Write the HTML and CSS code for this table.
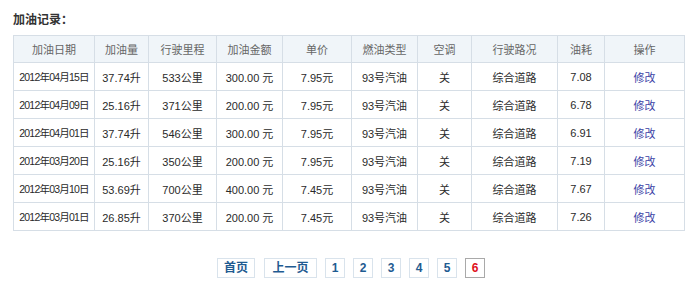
FILE: index.html
```html
<!DOCTYPE html>
<html lang="zh">
<head>
<meta charset="utf-8">
<link rel="stylesheet" href="styles.css">
</head>
<body>
<div class="page">
  <h2 class="title">加油记录：</h2>
  <table class="records">
    <colgroup>
      <col class="c1"><col class="c2"><col class="c3"><col class="c4"><col class="c5">
      <col class="c6"><col class="c7"><col class="c8"><col class="c9"><col class="c10">
    </colgroup>
    <thead>
      <tr><th>加油日期</th><th>加油量</th><th>行驶里程</th><th>加油金额</th><th>单价</th><th>燃油类型</th><th>空调</th><th>行驶路况</th><th>油耗</th><th>操作</th></tr>
    </thead>
    <tbody>
      <tr><td class="date">2012年04月15日</td><td>37.74升</td><td>533公里</td><td>300.00 元</td><td>7.95元</td><td>93号汽油</td><td>关</td><td>综合道路</td><td>7.08</td><td><a href="#" class="edit">修改</a></td></tr>
      <tr><td class="date">2012年04月09日</td><td>25.16升</td><td>371公里</td><td>200.00 元</td><td>7.95元</td><td>93号汽油</td><td>关</td><td>综合道路</td><td>6.78</td><td><a href="#" class="edit">修改</a></td></tr>
      <tr><td class="date">2012年04月01日</td><td>37.74升</td><td>546公里</td><td>300.00 元</td><td>7.95元</td><td>93号汽油</td><td>关</td><td>综合道路</td><td>6.91</td><td><a href="#" class="edit">修改</a></td></tr>
      <tr><td class="date">2012年03月20日</td><td>25.16升</td><td>350公里</td><td>200.00 元</td><td>7.95元</td><td>93号汽油</td><td>关</td><td>综合道路</td><td>7.19</td><td><a href="#" class="edit">修改</a></td></tr>
      <tr><td class="date">2012年03月10日</td><td>53.69升</td><td>700公里</td><td>400.00 元</td><td>7.45元</td><td>93号汽油</td><td>关</td><td>综合道路</td><td>7.67</td><td><a href="#" class="edit">修改</a></td></tr>
      <tr><td class="date">2012年03月01日</td><td>26.85升</td><td>370公里</td><td>200.00 元</td><td>7.45元</td><td>93号汽油</td><td>关</td><td>综合道路</td><td>7.26</td><td><a href="#" class="edit">修改</a></td></tr>
    </tbody>
  </table>
  <nav class="pager">
    <a href="#" class="pg wide1">首页</a>
    <a href="#" class="pg wide2">上一页</a>
    <a href="#" class="pg num">1</a>
    <a href="#" class="pg num">2</a>
    <a href="#" class="pg num">3</a>
    <a href="#" class="pg num">4</a>
    <a href="#" class="pg num">5</a>
    <span class="pg num current">6</span>
  </nav>
</div>
</body>
</html>
```

FILE: styles.css
```css
html, body {
  margin: 0;
  padding: 0;
  background: #ffffff;
}
.page {
  padding: 14px 13px 0 13px;
  font-family: "Liberation Sans", "Noto Sans CJK SC", sans-serif;
  font-size: 12px;
  color: #333333;
}
.title {
  margin: 0;
  font-size: 12px;
  font-weight: bold;
  line-height: 12px;
  color: #333333;
  height: 21px;
}
.records {
  border-collapse: collapse;
  table-layout: fixed;
  width: 671px;
  font-size: 11px;
}
.c1 { width: 81px; }
.c2 { width: 54px; }
.c3 { width: 68px; }
.c4 { width: 66px; }
.c5 { width: 69px; }
.c6 { width: 66px; }
.c7 { width: 54px; }
.c8 { width: 86px; }
.c9 { width: 47px; }
.c10 { width: 80px; }
.records th,
.records td {
  border: 1px solid #d6dee6;
  text-align: center;
  padding: 0;
  white-space: nowrap;
  overflow: hidden;
}
.records th {
  height: 26px;
  background: #f0f5f9;
  font-weight: normal;
  color: #666666;
}
.records td {
  height: 27px;
  color: #2a2a2a;
}
.records td.date {
  font-size: 10.5px;
  letter-spacing: -0.8px;
}
.edit {
  color: #3a3fa6;
  text-decoration: none;
}
.pager {
  display: flex;
  justify-content: center;
  gap: 8px;
  margin-top: 27px;
  padding-left: 2px;
}
.pg {
  box-sizing: border-box;
  height: 20px;
  line-height: 18px;
  border: 1px solid #d9e3ec;
  background: #ffffff;
  color: #1f5b91;
  font-weight: bold;
  font-size: 12px;
  text-align: center;
  text-decoration: none;
}
.wide1 { width: 38px; margin-right: 1px; }
.wide2 { width: 53px; }
.num { width: 20px; }
.current {
  border-color: #a9a9a9;
  color: #e0101a;
}
```
